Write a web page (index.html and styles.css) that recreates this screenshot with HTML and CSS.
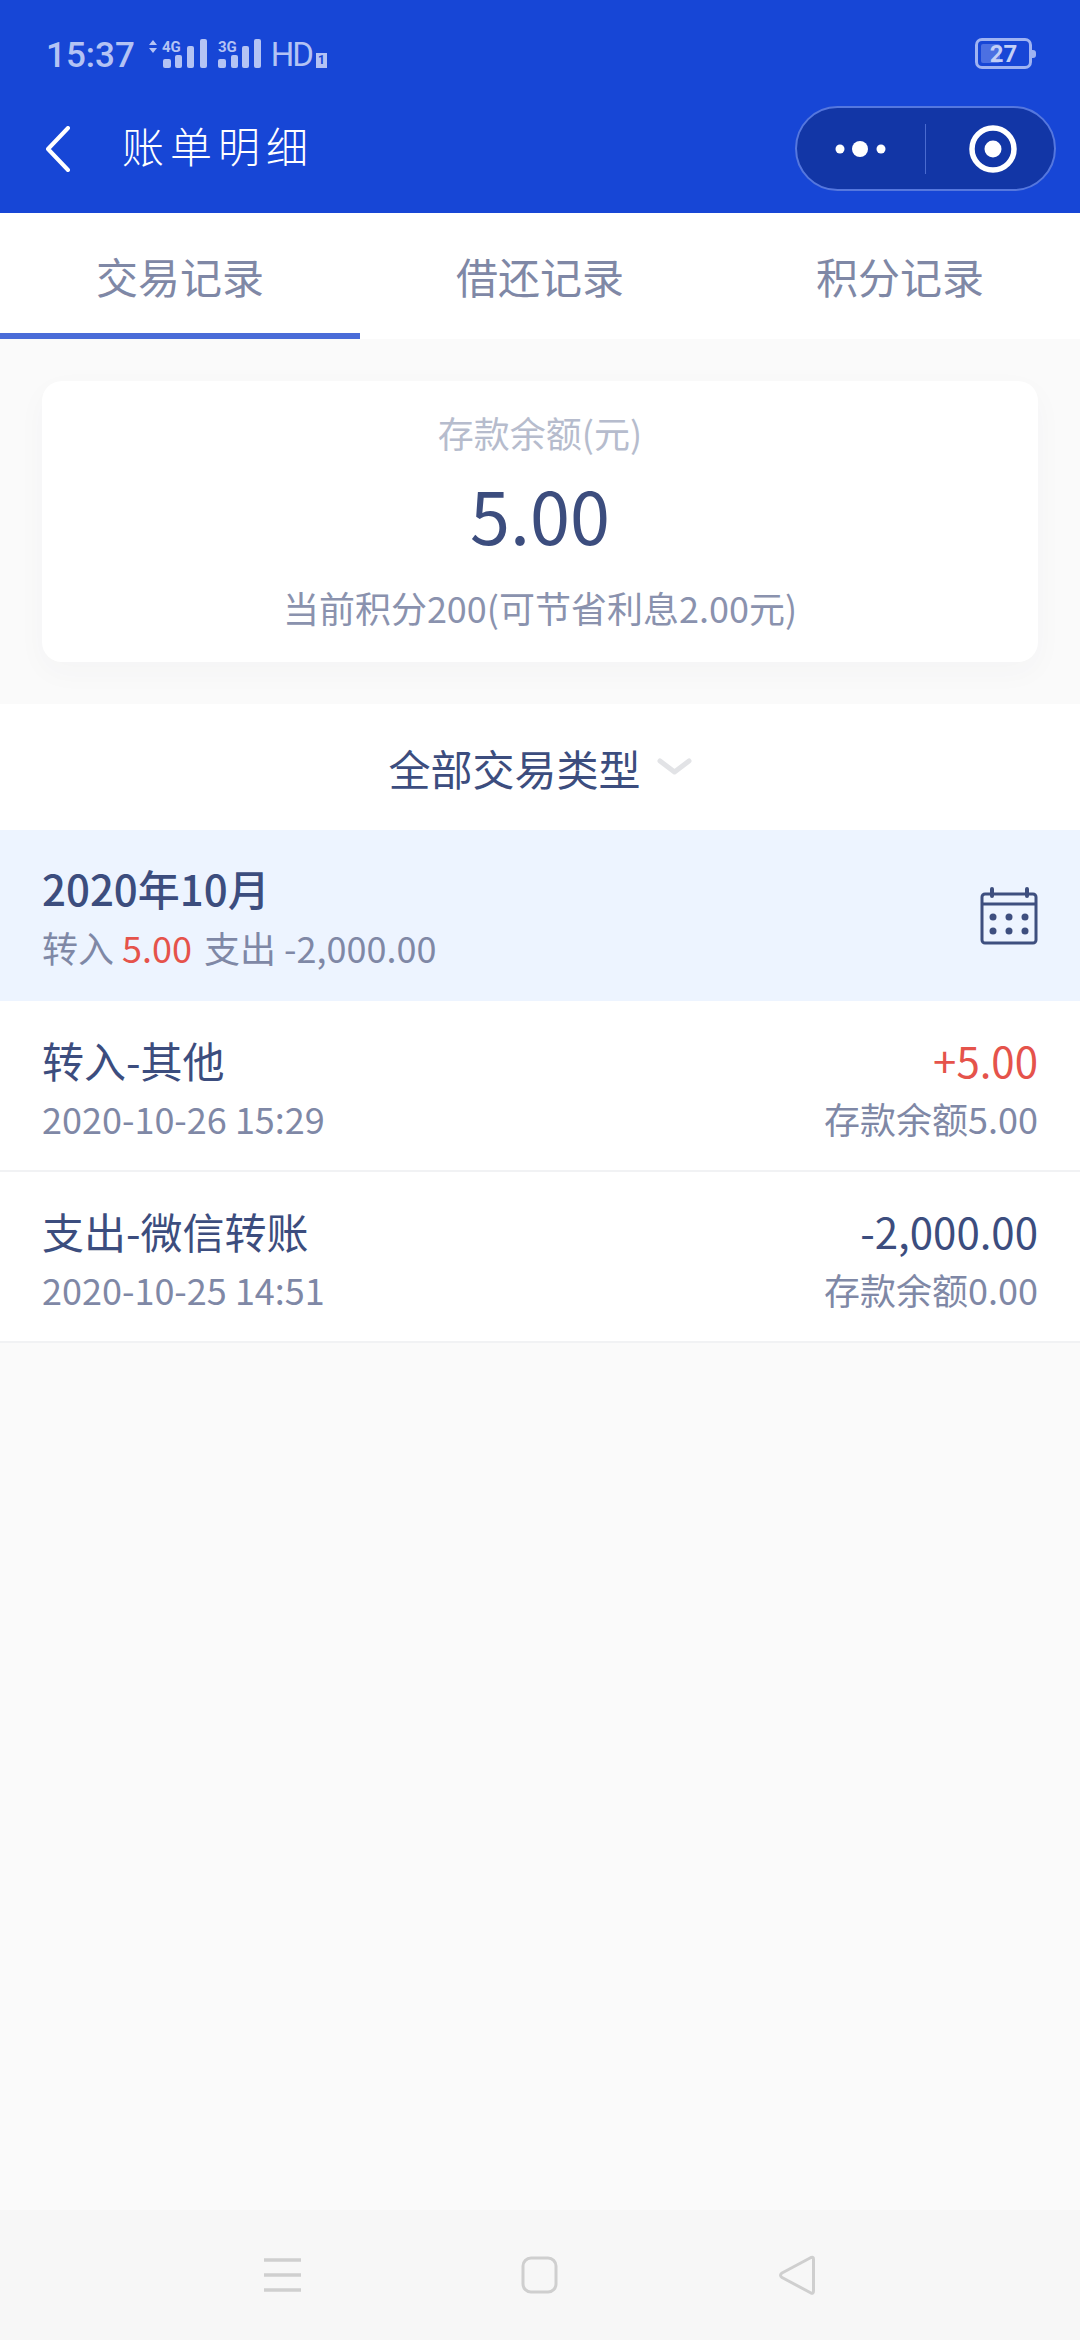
FILE: index.html
```html
<!DOCTYPE html>
<html lang="zh-CN">
<head>
<meta charset="utf-8">
<title>账单明细</title>
<link rel="stylesheet" href="styles.css">
</head>
<body>
<div class="app">
  <header class="header">
    <div class="status">
      <div class="status-left">
        <span class="time">15:37</span>
        <svg class="sig" width="59" height="29" viewBox="0 0 59 29">
          <path d="M1 6l4-5 4 5zM1 9l4 5 4-5z" fill="#b4c3f4"/>
          <text x="14" y="13" class="sig-t">4G</text>
          <rect x="15" y="20" width="8" height="9" rx="2" fill="#b4c3f4"/>
          <rect x="27" y="16" width="7" height="13" rx="2" fill="#b4c3f4"/>
          <rect x="39" y="7" width="7" height="22" rx="2" fill="#b4c3f4"/>
          <rect x="52" y="0" width="7" height="29" rx="2" fill="#b4c3f4"/>
        </svg>
        <svg class="sig sig-b" width="43" height="29" viewBox="0 0 43 29">
          <text x="0" y="13" class="sig-t">3G</text>
          <rect x="0" y="20" width="8" height="9" rx="2" fill="#b4c3f4"/>
          <rect x="13" y="16" width="7" height="13" rx="2" fill="#b4c3f4"/>
          <rect x="24" y="7" width="7" height="22" rx="2" fill="#b4c3f4"/>
          <rect x="36" y="0" width="7" height="29" rx="2" fill="#b4c3f4"/>
        </svg>
        <span class="hd">HD</span><span class="hd-one">1</span>
      </div>
      <div class="battery"><i class="battery-fill"></i><span class="battery-num">27</span></div>
    </div>
    <div class="nav">
      <svg class="back" width="24" height="46" viewBox="0 0 24 46"><path d="M22 2L2 23 22 44" fill="none" stroke="#fff" stroke-width="4" stroke-linecap="round" stroke-linejoin="round"/></svg>
      <h1 class="title">账单明细</h1>
      <div class="capsule">
        <div class="capsule-part">
          <svg width="52" height="20" viewBox="0 0 52 20"><circle cx="5" cy="10" r="4.500" fill="#fff"/><circle cx="25" cy="10" r="8" fill="#fff"/><circle cx="46" cy="10" r="4.500" fill="#fff"/></svg>
        </div>
        <i class="capsule-line"></i>
        <div class="capsule-part capsule-part-b">
          <svg width="48" height="48" viewBox="0 0 48 48"><circle cx="24" cy="24" r="21" fill="none" stroke="#fff" stroke-width="5.500"/><circle cx="24" cy="24" r="8.500" fill="#fff"/></svg>
        </div>
      </div>
    </div>
  </header>

  <nav class="tabs">
    <div class="tab tab-on">交易记录</div>
    <div class="tab">借还记录</div>
    <div class="tab">积分记录</div>
  </nav>

  <section class="summary">
    <div class="card">
      <div class="card-label">存款余额(元)</div>
      <div class="card-amount">5.00</div>
      <div class="card-note">当前积分200(可节省利息2.00元)</div>
    </div>
  </section>

  <div class="filter">
    <span>全部交易类型</span>
    <svg width="35" height="18" viewBox="0 0 35 18"><path d="M3 3l14.500 11L32 3" fill="none" stroke="#e2e3e6" stroke-width="5" stroke-linecap="round" stroke-linejoin="round"/></svg>
  </div>

  <div class="month">
    <div class="month-text">
      <div class="month-title">2020年10月</div>
      <div class="month-sub">转入 <span class="red">5.00</span><span class="month-out">支出 -2,000.00</span></div>
    </div>
    <svg width="58" height="58" viewBox="0 0 58 58">
      <rect x="2" y="7" width="54" height="49" rx="3" fill="none" stroke="#3e4f7f" stroke-width="3"/>
      <path d="M2 17h54" stroke="#3e4f7f" stroke-width="3"/>
      <path d="M12 2v7M47 2v7" stroke="#3e4f7f" stroke-width="4" stroke-linecap="round"/>
      <g fill="#3e4f7f"><circle cx="13" cy="30" r="3.500"/><circle cx="29" cy="30" r="3.500"/><circle cx="45" cy="30" r="3.500"/><circle cx="13" cy="44" r="3.500"/><circle cx="29" cy="44" r="3.500"/><circle cx="45" cy="44" r="3.500"/></g>
    </svg>
  </div>

  <div class="row">
    <div class="row-side">
      <div class="row-name">转入-其他</div>
      <div class="row-meta">2020-10-26 15:29</div>
    </div>
    <div class="row-side row-right">
      <div class="row-name row-red">+5.00</div>
      <div class="row-meta">存款余额5.00</div>
    </div>
  </div>
  <div class="row">
    <div class="row-side">
      <div class="row-name">支出-微信转账</div>
      <div class="row-meta">2020-10-25 14:51</div>
    </div>
    <div class="row-side row-right">
      <div class="row-name">-2,000.00</div>
      <div class="row-meta">存款余额0.00</div>
    </div>
  </div>

  <div class="spacer"></div>

  <footer class="sysnav">
    <svg width="37" height="36" viewBox="0 0 37 36"><path d="M0 3h37M0 18h37M0 33h37" stroke="#cfcfcf" stroke-width="3.500"/></svg>
    <svg width="37" height="38" viewBox="0 0 37 38"><rect x="2" y="2" width="33" height="34" rx="8" fill="none" stroke="#cfcfcf" stroke-width="3"/></svg>
    <svg width="38" height="42" viewBox="0 0 38 42"><path d="M33 3.500L4 19c-2 1.500-2 3 0 4.500L33 39c1.500.5 2.500 0 2.500-2V5c0-2-1-2-2.500-1.500z" fill="none" stroke="#cfcfcf" stroke-width="3" stroke-linejoin="round"/></svg>
  </footer>
</div>
</body>
</html>
```

FILE: styles.css
```css
* { box-sizing: border-box; }
html, body { margin: 0; padding: 0; }
body {
  width: 1080px;
  height: 2340px;
  font-family: "Noto Sans CJK SC", "Noto Sans", sans-serif;
  background: #fafafa;
  overflow: hidden;
}
.app { height: 2340px; display: flex; flex-direction: column; }

.header { height: 213px; background: #1746d6; color: #fff; flex: none; }
.status { height: 106px; padding: 30px 46px 0; display: flex; justify-content: space-between; align-items: flex-start; }
.status-left { display: flex; align-items: center; color: #b4c3f4; height: 50px; }
.time { font-family: Roboto, sans-serif; font-size: 35px; font-weight: 500; margin-right: 13px; padding-top: 1px; }
.sig { margin: 0 0 3px; }
.sig-b { margin-left: 11px; }
.sig-t { font-family: Roboto, sans-serif; font-size: 15px; font-weight: 700; fill: #b4c3f4; }
.hd { font-family: Roboto, sans-serif; font-size: 33px; letter-spacing: -2px; margin-left: 10px; margin-bottom: 2px; }
.hd-one { font-family: Roboto, sans-serif; font-size: 12px; font-weight: 700; background: #b4c3f4; color: #1746d6; width: 11px; height: 15px; line-height: 15px; text-align: center; margin-top: 11px; margin-left: 4px; }
.battery { position: relative; width: 57px; height: 31px; margin-top: 8px; margin-right: 2px; border: 3px solid #9fb3f2; border-radius: 7px; display: flex; align-items: center; justify-content: center; }
.battery::after { content: ""; position: absolute; right: -7px; top: 9px; width: 4px; height: 8px; background: #9fb3f2; border-radius: 0 3px 3px 0; }
.battery-fill { position: absolute; left: 3px; top: 3px; bottom: 3px; width: 19px; background: #4c70e2; border-radius: 2px; }
.battery-num { position: relative; font-family: Roboto, sans-serif; font-size: 24px; font-weight: 700; color: #c3cff7; line-height: 1; }

.nav { height: 107px; padding: 0 24px 22px 46px; display: flex; align-items: center; }
.back { flex: none; }
.title { margin: 0 0 0 52px; padding-bottom: 8px; font-size: 42px; font-weight: 300; letter-spacing: 6px; flex: 1; }
.capsule { width: 261px; height: 85px; border-radius: 43px; background: #1236a6; border: 2px solid #5577de; display: flex; align-items: center; }
.capsule-part { flex: 0 0 128px; display: flex; justify-content: center; align-items: center; }
.capsule-part-b { padding-left: 6px; }
.capsule-line { width: 1px; height: 50px; background: #4a6bd0; }

.tabs { height: 126px; background: #fff; display: flex; flex: none; }
.tab { flex: 1; text-align: center; font-size: 42px; line-height: 124px; color: #7f88a6; padding-top: 1px; }
.tab-on { border-bottom: 6px solid #4a6cd8; }

.summary { padding: 42px; height: 365px; flex: none; }
.card { background: #fff; border-radius: 20px; height: 281px; box-shadow: 0 10px 30px rgba(60, 70, 100, .03); text-align: center; padding-top: 29px; }
.card-label { font-size: 36px; line-height: 44px; color: #b6bccd; }
.card-amount { font-size: 72px; line-height: 104px; color: #3c4d7e; margin-top: 8px; }
.card-note { font-size: 36px; line-height: 50px; color: #8a92ae; margin-top: 16px; }

.filter { height: 126px; background: #fff; display: flex; align-items: center; justify-content: center; gap: 16px; font-size: 42px; color: #3c4d7e; flex: none; }

.month { height: 171px; background: #edf4ff; padding: 0 42px; display: flex; justify-content: space-between; align-items: center; flex: none; }
.month-text { padding-bottom: 2px; }
.month-title { font-size: 42px; line-height: 60px; font-weight: 500; color: #3c4d7e; }
.month-sub { font-size: 36px; line-height: 50px; color: #7f88a6; margin-top: 4px; }
.month-out { margin-left: 12px; }
.red { color: #e5534b; }

.row { height: 171px; background: #fff; border-bottom: 2px solid #f1f2f4; padding: 0 42px; display: flex; justify-content: space-between; align-items: center; flex: none; }
.row-right { text-align: right; }
.row-name { font-size: 42px; line-height: 62px; color: #3c4d7e; margin-bottom: 2px; }
.row-red { color: #e5534b; }
.row-meta { font-size: 36px; line-height: 50px; color: #7f88a6; }

.spacer { flex: 1; }
.sysnav { height: 130px; background: #f7f7f7; flex: none; display: flex; align-items: center; gap: 220px; padding: 0 0 0 264px; }
```
